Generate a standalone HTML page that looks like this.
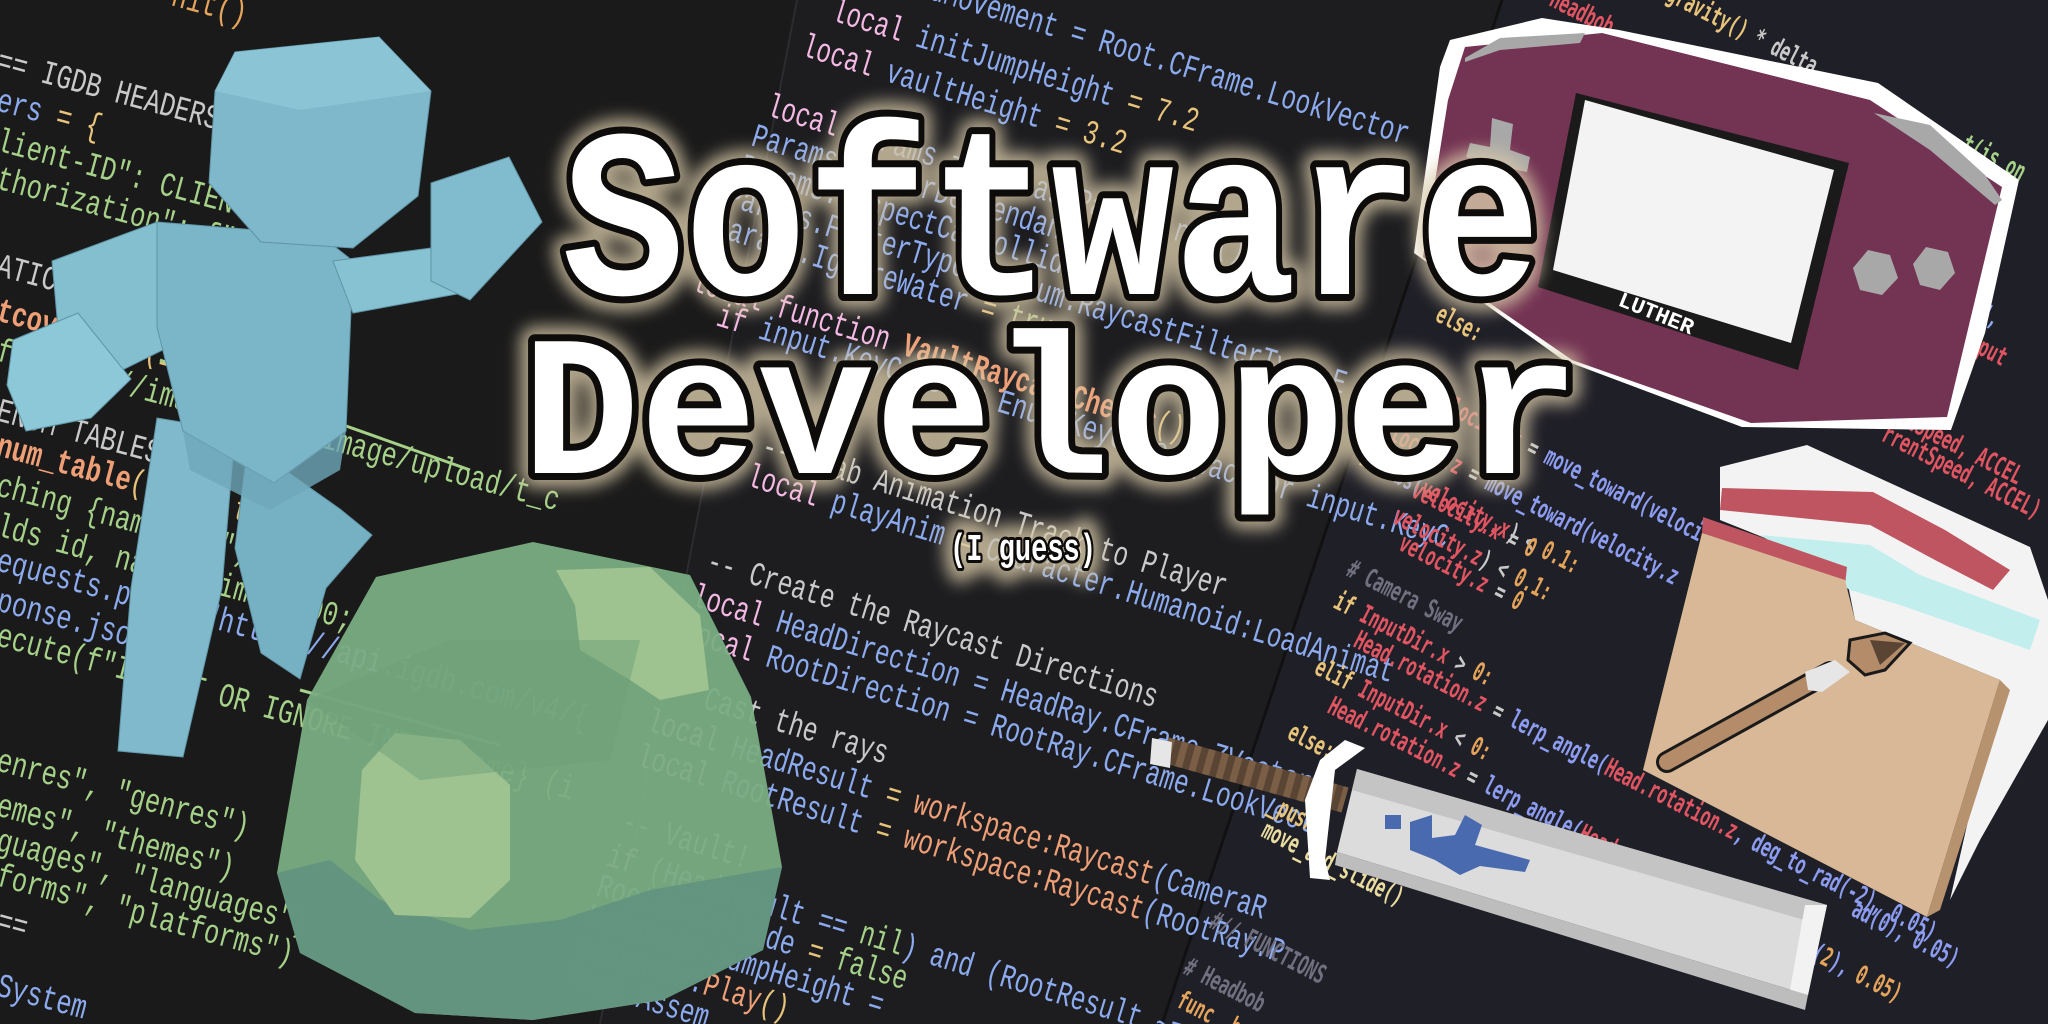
<!DOCTYPE html>
<html><head><meta charset="utf-8"><style>
html,body{margin:0;padding:0;background:#1b1b1c;overflow:hidden;width:2048px;height:1024px;}
svg{display:block}
.m{font-family:"Liberation Mono","DejaVu Sans Mono",monospace;}
.r{font-family:"DejaVu Sans Mono","Liberation Mono",monospace;font-weight:bold;}
</style></head><body>
<svg width="2048" height="1024" viewBox="0 0 2048 1024" xmlns="http://www.w3.org/2000/svg">
<defs>
<filter id="glow" x="-10%" y="-20%" width="120%" height="140%"><feGaussianBlur stdDeviation="8"/></filter>
</defs>
<rect width="2048" height="1024" fill="#1a1a1a"/>
<polygon points="797,0 1502,0 1162,1024 600,1024" fill="#1d1d20"/>
<polygon points="1502,0 2048,0 2048,1024 1162,1024" fill="#1f1f27"/>
<line x1="797" y1="0" x2="600" y2="1024" stroke="#2c2c30" stroke-width="2"/>
<line x1="1502" y1="0" x2="1162" y2="1024" stroke="#111" stroke-width="3"/>

<!-- left code -->
<g class="m" font-size="34">
<text transform="translate(170,5) rotate(15) scale(0.75,1)" fill="#e5a45b">nit()</text>
<text transform="translate(-5,70) rotate(15) scale(0.75,1)" fill="#c9c9c9">== IGDB HEADERS</text>
<text transform="translate(-5,110) rotate(15) scale(0.75,1)"><tspan fill="#8caaee">ers</tspan><tspan fill="#e8c47a"> = {</tspan></text>
<text transform="translate(-5,150) rotate(15) scale(0.75,1)" fill="#a6d189">lient-ID": CLIENT_ID,</text>
<text transform="translate(-5,188) rotate(15) scale(0.75,1)" fill="#a6d189">thorization": f"Bearer</text>
<text transform="translate(-5,275) rotate(15) scale(0.75,1)" fill="#c9c9c9">ATIC HEADERS ===</text>
<text transform="translate(-5,320) rotate(15) scale(0.75,1)"><tspan fill="#ef9f76" font-weight="bold">tcover_url</tspan><tspan fill="#e8c47a">(image_id):</tspan></text>
<text transform="translate(-5,360) rotate(15) scale(0.75,1)" fill="#a6d189">  f"https://images.igdb/image/upload/t_c</text>
<text transform="translate(-5,420) rotate(15) scale(0.75,1)" fill="#c9c9c9">ENUM TABLES ===</text>
<text transform="translate(-5,455) rotate(15) scale(0.75,1)"><tspan fill="#ef9f76" font-weight="bold">num_table</tspan><tspan fill="#e8c47a">(name, table):</tspan></text>
<text transform="translate(-5,495) rotate(15) scale(0.75,1)" fill="#a6d189">ching {name}...")</text>
<text transform="translate(-5,535) rotate(15) scale(0.75,1)" fill="#a6d189">lds id, name; limit 500;</text>
<text transform="translate(-5,570) rotate(15) scale(0.75,1)" fill="#8caaee">equests.post(f"https://api.igdb.com/v4/{</text>
<text transform="translate(-5,610) rotate(15) scale(0.75,1)" fill="#8caaee">ponse.json()</text>
<text transform="translate(-5,645) rotate(15) scale(0.75,1)" fill="#a6d189">ecute(f"INSERT OR IGNORE INTO {name} (i</text>
<text transform="translate(-5,770) rotate(15) scale(0.75,1)" fill="#a6d189">enres", "genres")</text>
<text transform="translate(-5,815) rotate(15) scale(0.75,1)" fill="#a6d189">emes", "themes")</text>
<text transform="translate(-5,850) rotate(15) scale(0.75,1)" fill="#a6d189">guages", "languages")</text>
<text transform="translate(-5,885) rotate(15) scale(0.75,1)" fill="#a6d189">forms", "platforms")</text>
<text transform="translate(-5,930) rotate(15) scale(0.75,1)" fill="#c9c9c9">==</text>
<text transform="translate(-5,995) rotate(15) scale(0.75,1)" fill="#8caaee">System</text>
</g>

<!-- middle code -->
<g class="m" font-size="34">
<text transform="translate(900,-10) rotate(17) scale(0.72,1)" fill="#8caaee">ardMovement = Root.CFrame.LookVector</text>
<text transform="translate(830,20) rotate(17) scale(0.72,1)"><tspan fill="#f4b8e4">local</tspan><tspan fill="#8caaee"> initJumpHeight </tspan><tspan fill="#e8c47a">= 7.2</tspan></text>
<text transform="translate(800,55) rotate(17) scale(0.72,1)"><tspan fill="#f4b8e4">local</tspan><tspan fill="#8caaee"> vaultHeight </tspan><tspan fill="#e8c47a">= 3.2</tspan></text>
<text transform="translate(765,115) rotate(17) scale(0.72,1)"><tspan fill="#f4b8e4">local</tspan><tspan fill="#8caaee"> Params = RaycastParams.new()</tspan></text>
<text transform="translate(750,145) rotate(17) scale(0.72,1)" fill="#8caaee">Params.FilterDescendants</text>
<text transform="translate(738,175) rotate(17) scale(0.72,1)" fill="#8caaee">Params.RespectCanCollide</text>
<text transform="translate(725,205) rotate(17) scale(0.72,1)"><tspan fill="#8caaee">Params.FilterType = Enum.RaycastFilterType.E</tspan></text>
<text transform="translate(712,235) rotate(17) scale(0.72,1)"><tspan fill="#8caaee">Params.IgnoreWater </tspan><tspan fill="#e8c47a">= </tspan><tspan fill="#a6d189">true</tspan></text>
<text transform="translate(690,290) rotate(17) scale(0.72,1)"><tspan fill="#f4b8e4">local function </tspan><tspan fill="#ef9f76" font-weight="bold">VaultRaycastChecks</tspan><tspan fill="#e8c47a">()</tspan></text>
<text transform="translate(715,325) rotate(17) scale(0.72,1)"><tspan fill="#f4b8e4">if </tspan><tspan fill="#8caaee">input.KeyCode == Enum.KeyCode.Space or input.KeyC</tspan></text>
<text transform="translate(760,455) rotate(17) scale(0.72,1)" fill="#c9c9c9">-- Grab Animation Track to Player</text>
<text transform="translate(745,485) rotate(17) scale(0.72,1)"><tspan fill="#f4b8e4">local</tspan><tspan fill="#8caaee"> playAnim </tspan><tspan fill="#e8c47a">= </tspan><tspan fill="#8caaee">Character.Humanoid:LoadAnimat</tspan></text>
<text transform="translate(705,570) rotate(17) scale(0.72,1)" fill="#c9c9c9">-- Create the Raycast Directions</text>
<text transform="translate(690,605) rotate(17) scale(0.72,1)"><tspan fill="#f4b8e4">local</tspan><tspan fill="#8caaee"> HeadDirection = HeadRay.CFrame.ZVector</tspan></text>
<text transform="translate(680,640) rotate(17) scale(0.72,1)"><tspan fill="#f4b8e4">local</tspan><tspan fill="#8caaee"> RootDirection = RootRay.CFrame.LookVecto</tspan></text>
<text transform="translate(660,695) rotate(17) scale(0.72,1)" fill="#c9c9c9">-- Cast the rays</text>
<text transform="translate(645,730) rotate(17) scale(0.72,1)"><tspan fill="#f4b8e4">local</tspan><tspan fill="#8caaee"> HeadResult </tspan><tspan fill="#e8c47a">= </tspan><tspan fill="#ef9f76">workspace:Raycast</tspan><tspan fill="#8caaee">(CameraR</tspan></text>
<text transform="translate(635,765) rotate(17) scale(0.72,1)"><tspan fill="#f4b8e4">local</tspan><tspan fill="#8caaee"> RootResult </tspan><tspan fill="#e8c47a">= </tspan><tspan fill="#ef9f76">workspace:Raycast</tspan><tspan fill="#8caaee">(RootRay.P</tspan></text>
<text transform="translate(620,830) rotate(17) scale(0.72,1)" fill="#c9c9c9">-- Vault!</text>
<text transform="translate(605,865) rotate(17) scale(0.72,1)"><tspan fill="#f4b8e4">if </tspan><tspan fill="#8caaee">(HeadResult == </tspan><tspan fill="#a6d189">nil</tspan><tspan fill="#8caaee">) and (RootResult ~= nil)</tspan></text>
<text transform="translate(595,895) rotate(17) scale(0.72,1)"><tspan fill="#8caaee">RootCanCollide </tspan><tspan fill="#e8c47a">= </tspan><tspan fill="#a6d189">false</tspan></text>
<text transform="translate(585,925) rotate(17) scale(0.72,1)" fill="#8caaee">Humanoid.JumpHeight =</text>
<text transform="translate(575,955) rotate(17) scale(0.72,1)"><tspan fill="#8caaee">playAnim:</tspan><tspan fill="#ef9f76">Play</tspan><tspan fill="#e8c47a">()</tspan></text>
<text transform="translate(565,985) rotate(17) scale(0.72,1)" fill="#8caaee">Root.Assem</text>
</g>
<line x1="300" y1="690" x2="500" y2="745" stroke="#a6d189" stroke-width="3"/>
<line x1="160" y1="360" x2="470" y2="470" stroke="#a6d189" stroke-width="3"/>

<!-- right code -->
<g class="r" font-size="26">
<text transform="translate(1548,5) rotate(27) scale(0.62,1)" fill="#e05561">Headbob</text>
<text transform="translate(1665,0) rotate(27) scale(0.62,1)"><tspan fill="#e8c47a">gravity()</tspan><tspan fill="#c9c9c9"> * delta</tspan></text>
<text transform="translate(1960,150) rotate(27) scale(0.62,1)" fill="#a6d189">t(is_on</text>
<text transform="translate(1434,320) rotate(27) scale(0.62,1)" fill="#e8c47a">else:</text>
<text transform="translate(1960,310) rotate(27) scale(0.62,1)" fill="#8caaee">ds",</text>
<text transform="translate(1950,340) rotate(27) scale(0.62,1)" fill="#e05561">(Input</text>
<text transform="translate(1430,405) rotate(27) scale(0.62,1)"><tspan fill="#e05561">velocity.x</tspan><tspan fill="#c9c9c9"> = </tspan><tspan fill="#8c9cf0">move_toward(velocity.x, 0</tspan></text>
<text transform="translate(1371,431) rotate(27) scale(0.62,1)"><tspan fill="#e05561">velocity.z</tspan><tspan fill="#c9c9c9"> = </tspan><tspan fill="#8c9cf0">move_toward(velocity.z</tspan></text>
<text transform="translate(1358,464) rotate(27) scale(0.62,1)"><tspan fill="#e8c47a">if </tspan><tspan fill="#8c9cf0">abs(</tspan><tspan fill="#e05561">velocity.x</tspan><tspan fill="#c9c9c9">) &lt; </tspan><tspan fill="#e5a45b">0.1:</tspan></text>
<text transform="translate(1410,496) rotate(27) scale(0.62,1)"><tspan fill="#e05561">velocity.x</tspan><tspan fill="#c9c9c9"> = </tspan><tspan fill="#e5a45b">0</tspan></text>
<text transform="translate(1391,522) rotate(27) scale(0.62,1)"><tspan fill="#e05561">velocity.z</tspan><tspan fill="#c9c9c9">) &lt; </tspan><tspan fill="#e5a45b">0.1:</tspan></text>
<text transform="translate(1397,549) rotate(27) scale(0.62,1)"><tspan fill="#e05561">velocity.z</tspan><tspan fill="#c9c9c9"> = </tspan><tspan fill="#e5a45b">0</tspan></text>
<text transform="translate(1870,410) rotate(27) scale(0.62,1)" fill="#e05561">rrentSpeed, ACCEL</text>
<text transform="translate(1880,440) rotate(27) scale(0.62,1)" fill="#e05561">rrentSpeed, ACCEL)</text>
<text transform="translate(1345,575) rotate(27) scale(0.62,1)" fill="#707080"># Camera Sway</text>
<text transform="translate(1332,607) rotate(27) scale(0.62,1)"><tspan fill="#e8c47a">if </tspan><tspan fill="#e05561">InputDir.x</tspan><tspan fill="#c9c9c9"> &gt; </tspan><tspan fill="#e5a45b">0:</tspan></text>
<text transform="translate(1352,646) rotate(27) scale(0.62,1)"><tspan fill="#e05561">Head.rotation.z</tspan><tspan fill="#c9c9c9"> = </tspan><tspan fill="#8c9cf0">lerp_angle(</tspan><tspan fill="#e05561">Head.rotation.z</tspan><tspan fill="#8c9cf0">, deg_to_rad(-2), 0.05)</tspan></text>
<text transform="translate(1313,673) rotate(27) scale(0.62,1)"><tspan fill="#e8c47a">elif </tspan><tspan fill="#e05561">InputDir.x</tspan><tspan fill="#c9c9c9"> &lt; </tspan><tspan fill="#e5a45b">0:</tspan></text>
<text transform="translate(1326,712) rotate(27) scale(0.62,1)"><tspan fill="#e05561">Head.rotation.z</tspan><tspan fill="#c9c9c9"> = </tspan><tspan fill="#8c9cf0">lerp_angle(</tspan><tspan fill="#e05561">Head.rotation.z</tspan><tspan fill="#8c9cf0">, deg_to_rad(</tspan><tspan fill="#e5a45b">2</tspan><tspan fill="#8c9cf0">), </tspan><tspan fill="#e5a45b">0.05)</tspan></text>
<text transform="translate(1286,738) rotate(27) scale(0.62,1)" fill="#e8c47a">else:</text>
<text transform="translate(1267,810) rotate(27) scale(0.62,1)" fill="#e8c47a">_push</text>
<text transform="translate(1260,836) rotate(27) scale(0.62,1)" fill="#e8dca0">move_and_slide()</text>
<text transform="translate(1208,927) rotate(27) scale(0.62,1)" fill="#707080">#// FUNCTIONS</text>
<text transform="translate(1182,973) rotate(27) scale(0.62,1)" fill="#707080"># Headbob</text>
<text transform="translate(1175,1006) rotate(27) scale(0.62,1)" fill="#e5a45b">func _headbob</text>
<text transform="translate(1850,915) rotate(27) scale(0.62,1)" fill="#8c9cf0">ad(0), 0.05)</text>
</g>

<!-- figure -->
<g stroke="#5f95a6" stroke-width="1">
<polygon points="157,418 235,431 222,588 183,757 118,751 131,588" fill="#7fb9cb"/>
<polygon points="248,444 340,509 372,535 326,588 300,679 261,653 235,548" fill="#76b0c3"/>
<polygon points="52,261 157,222 183,340 104,379 59,340" fill="#84bfd0"/>
<polygon points="13,340 78,313 131,379 91,418 26,431 7,385" fill="#8dc8d8"/>
<polygon points="157,222 320,235 353,261 346,431 274,483 183,431 157,327" fill="#7ab5c8"/>
<polygon points="333,261 431,248 457,294 353,313" fill="#87c2d3"/>
<polygon points="431,183 509,157 542,222 470,300 431,281" fill="#80bccd"/>
<polygon points="235,52 379,37 431,91 418,196 353,248 261,242 209,183 215,91" fill="#7fb8ca"/>
</g>
<polygon points="235,52 379,37 431,91 300,110 215,91" fill="#8fc9da" opacity=".7"/>
<polygon points="183,431 274,483 346,431 340,470 270,510 190,470" fill="#6ea7b9" opacity=".8"/>

<!-- globe -->
<polygon points="533,542 690,575 751,697 782,867 763,950 663,1000 533,1020 415,1013 300,953 277,873 307,700 376,577" fill="#7aad82" opacity=".95"/>
<polygon points="277,873 330,860 380,900 470,930 560,920 650,890 782,867 763,950 663,1000 533,1020 415,1013 300,953" fill="#62927f" opacity=".9"/>
<polygon points="395,733 460,740 510,785 510,880 470,918 395,915 355,860 362,770" fill="#9ec290"/>
<polygon points="556,570 650,567 700,615 709,690 660,700 630,680 580,650 575,605" fill="#9ec290"/>
<polygon points="307,700 450,640 640,640 610,760 420,780" fill="#6e9f78" opacity=".5"/>

<!-- gameboy -->
<polygon points="1450,40 1542,18 1619,30 1878,83 2019,180 1985,333 1951,430 1742,427 1563,360 1414,253 1440,67" fill="#fff"/>
<polygon points="1465,47 1602,33 1870,100 2002,187 1947,417 1751,423 1572,360 1423,257 1448,100" fill="#733353"/>
<polygon points="1465,58 1500,38 1585,33 1580,43 1500,50 1465,62" fill="#a8a8a8"/>
<polygon points="1874,113 1930,125 1985,175 2002,200 1995,205 1930,150" fill="#a8a8a8"/>
<polygon points="1576,93 1849,163 1798,370 1538,287" fill="#1a1a1a"/>
<polygon points="1585,100 1834,170 1791,343 1553,270" fill="#f3f3f3"/>
<text transform="translate(1617,305) rotate(22)" class="m" font-size="22" font-weight="bold" fill="#fff">LUTHER</text>
<polygon points="1492,118 1513,124 1510,150 1530,157 1527,172 1507,168 1503,182 1485,178 1488,163 1466,157 1470,143 1490,147" fill="#a8a8a8"/>
<polygon points="1868,250 1890,255 1898,278 1882,295 1860,290 1853,268" fill="#a8a8a8"/>
<polygon points="1926,247 1948,252 1955,273 1940,290 1920,285 1913,264" fill="#a8a8a8"/>

<!-- folder -->
<polygon points="1720,467 1807,445 2030,547 2048,600 2048,720 1980,840 1950,900 2000,680 1855,620 1845,570 1720,520" fill="#f3f3f3"/>
<polygon points="1722,488 1873,492 1945,530 2010,570 1993,590 1935,560 1870,525 1720,510" fill="#bf5560"/>
<polygon points="1760,535 1870,545 1920,575 2040,620 2030,650 1900,605 1850,590" fill="#c3eeee"/>
<polygon points="1703,517 1847,567 1845,585 1702,533" fill="#bf5560"/>
<polygon points="1702,533 1845,580 1855,620 2000,680 1927,917 1643,770" fill="#d8b896"/>
<polygon points="2000,680 2010,690 1940,910 1927,917" fill="#b7926e"/>
<line x1="1667" y1="762" x2="1830" y2="672" stroke="#1a1a1a" stroke-width="22" stroke-linecap="round"/>
<line x1="1667" y1="762" x2="1830" y2="672" stroke="#b58c6a" stroke-width="16" stroke-linecap="round"/>
<polygon points="1805,672 1835,660 1850,672 1822,692 1808,690" fill="#e6e6e6"/>
<polygon points="1850,640 1885,633 1910,643 1885,670 1865,675 1848,660" fill="#b58c6a" stroke="#1a1a1a" stroke-width="3"/>
<polygon points="1870,640 1905,643 1880,665" fill="#5a4535"/>

<!-- sword -->
<line x1="1165" y1="750" x2="1345" y2="800" stroke="#5a4535" stroke-width="26"/>
<line x1="1165" y1="750" x2="1345" y2="800" stroke="#7a5e45" stroke-width="26" stroke-dasharray="7 7"/>
<polygon points="1152,738 1172,742 1170,768 1150,764" fill="#e6e6e6"/>
<polygon points="1305,800 1320,760 1345,740 1365,748 1335,770 1325,860 1330,880 1310,878" fill="#fff"/>
<polygon points="1357,769 1827,905 1808,995 1337,852" fill="#dcdcdc"/>
<polygon points="1357,769 1827,905 1822,925 1352,790" fill="#c4c4c4"/>
<polygon points="1805,905 1827,905 1808,995 1790,990" fill="#f2f2f2"/>
<polygon points="1337,852 1808,995 1805,1010 1335,865" fill="#bdbdbd"/>
<g fill="#4a6ab0">
<rect x="1385" y="815" width="16" height="14"/>
<polygon points="1410,822 1432,815 1432,838 1455,835 1465,815 1482,825 1475,845 1530,860 1525,872 1480,866 1460,875 1435,860 1410,850"/>
</g>

<!-- title -->
<g font-family="'Liberation Mono','DejaVu Sans Mono',monospace" font-weight="bold">
<g filter="url(#glow)" fill="#e8dcc0" stroke="#d8c9a8" stroke-width="30" stroke-linejoin="round" opacity=".8">
<text x="562" y="294" font-size="240" textLength="979" lengthAdjust="spacingAndGlyphs">Software</text>
<text x="522" y="473" font-size="200" textLength="1058" lengthAdjust="spacingAndGlyphs">Developer</text>
<text x="950" y="560" font-size="38" textLength="146" lengthAdjust="spacingAndGlyphs">(I guess)</text>
</g>
<g fill="#fff" stroke="#0e0c0a" stroke-width="14" stroke-linejoin="round" paint-order="stroke">
<text x="562" y="294" font-size="240" textLength="979" lengthAdjust="spacingAndGlyphs">Software</text>
<text x="522" y="473" font-size="200" textLength="1058" lengthAdjust="spacingAndGlyphs">Developer</text>
<text x="950" y="560" font-size="38" stroke-width="6" textLength="146" lengthAdjust="spacingAndGlyphs">(I guess)</text>
</g>
</g>
</svg>
</body></html>
